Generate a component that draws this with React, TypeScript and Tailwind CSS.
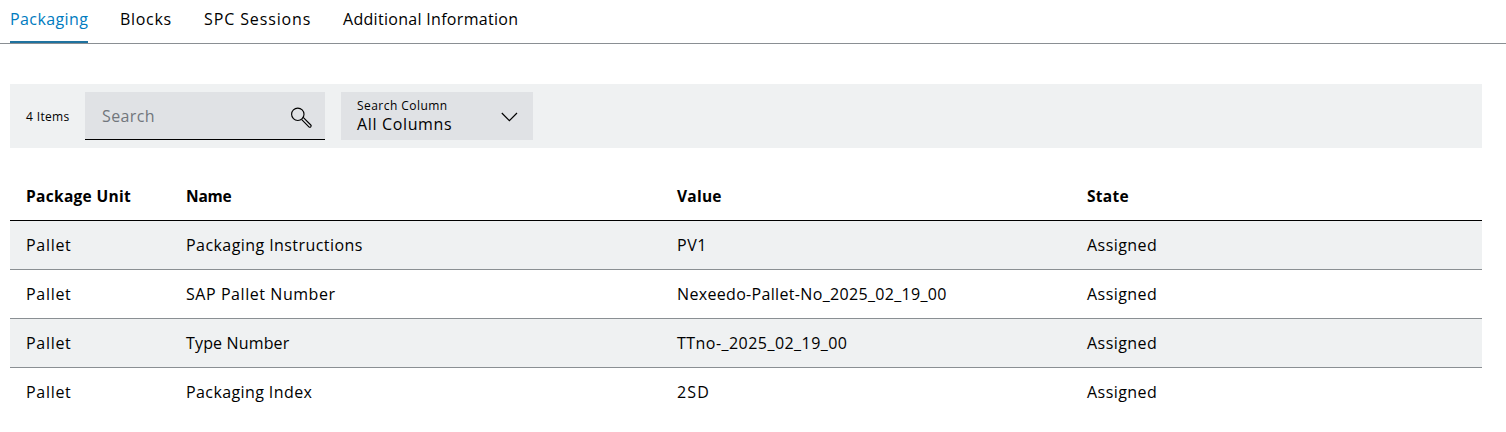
import { useState } from "react";

const tabs = [
  { label: "Packaging", className: "w-[78px] tracking-[0.4px]" },
  { label: "Blocks", className: "w-[52px] tracking-[0.7px]" },
  { label: "SPC Sessions", className: "w-[107px] tracking-[0.88px]" },
  { label: "Additional Information", className: "w-[175px] tracking-[0.3px]" },
];

const columns = [
  { label: "Package Unit", className: "tracking-[0.3px]" },
  { label: "Name", className: "tracking-[-0.2px]" },
  { label: "Value", className: "tracking-[0.25px]" },
  { label: "State", className: "tracking-[0.3px]" },
];

const rows = [
  { unit: "Pallet", name: "Packaging Instructions", value: "PV1", state: "Assigned", nameClass: "tracking-[0.43px]", valueClass: "tracking-[0.6px]" },
  { unit: "Pallet", name: "SAP Pallet Number", value: "Nexeedo-Pallet-No_2025_02_19_00", state: "Assigned", nameClass: "tracking-[0.56px]", valueClass: "tracking-[0.33px]" },
  { unit: "Pallet", name: "Type Number", value: "TTno-_2025_02_19_00", state: "Assigned", nameClass: "tracking-[0.15px]", valueClass: "tracking-[0.46px]" },
  { unit: "Pallet", name: "Packaging Index", value: "2SD", state: "Assigned", nameClass: "tracking-[0.4px]", valueClass: "tracking-[1.2px]" },
];

const grid = "grid grid-cols-[160px_491px_410px_411px] h-[49px] items-center";

function SearchIcon() {
  return (
    <svg className="w-6 h-6 shrink-0" viewBox="0 0 24 24" fill="none" stroke="#000" strokeWidth="1.15">
      <circle cx="7.8" cy="10.3" r="6.2" />
      <path d="M11.5 15.4 L18.9 22.8 A1.2 1.2 0 0 0 20.8 21 L13.2 13.4" />
    </svg>
  );
}

function ChevronIcon() {
  return (
    <svg className="w-6 h-6 shrink-0" viewBox="0 0 24 24" fill="none" stroke="#000" strokeWidth="1.2">
      <path d="M4.8 9 L12.4 16.6 L20 9" />
    </svg>
  );
}

export default function App() {
  const [active, setActive] = useState("Packaging");

  return (
    <div className="w-full h-[432px] overflow-hidden bg-white text-black text-[16px] leading-6 font-['Open_Sans',sans-serif]">
      {/* Tabs */}
      <div className="flex gap-8 h-11 pl-[10px] border-b border-[#8a8f93]">
        {tabs.map((tab) => (
          <button
            key={tab.label}
            onClick={() => setActive(tab.label)}
            className={`h-[43px] pt-[7px] flex items-start whitespace-nowrap border-b-2 ${tab.className} ${
              active === tab.label ? "text-[#007bc0] border-[#1f729f]" : "border-transparent"
            }`}
          >
            {tab.label}
          </button>
        ))}
      </div>

      <div className="ml-[10px] w-[1472px]">
        {/* Toolbar */}
        <div className="mt-10 h-16 flex items-center bg-[#eff1f2] pl-4">
          <span className="w-[59px] pt-0.5 text-[12px] whitespace-nowrap tracking-[0.35px]">4 Items</span>
          <label className="w-60 h-12 flex items-center bg-[#e0e2e5] border-b border-black pl-[17px] pr-[11px]">
            <input
              placeholder="Search"
              className="flex-1 min-w-0 pt-px outline-none bg-transparent tracking-[0.4px] placeholder:text-[#71767c]"
            />
            <SearchIcon />
          </label>
          <div className="ml-4 w-48 h-12 flex items-center bg-[#e0e2e5] pl-4 pr-3">
            <div className="flex-1 pb-px whitespace-nowrap">
              <div className="text-[12px] leading-[17px] tracking-[0.45px]">Search Column</div>
              <div className="leading-[21px] tracking-[0.65px]">All Columns</div>
            </div>
            <ChevronIcon />
          </div>
        </div>

        {/* Table */}
        <div className="mt-6 tracking-[0.45px]">
          <div className={`${grid} border-b border-black text-[15.5px] font-bold`}>
            {columns.map((column) => (
              <div key={column.label} className={`pl-4 ${column.className}`}>{column.label}</div>
            ))}
          </div>
          {rows.map((row) => (
            <div key={row.name} className={`${grid} border-b border-[#8a8f93] odd:bg-white even:bg-[#eff1f2] last:border-transparent`}>
              <div className="pl-4 tracking-[0.7px]">{row.unit}</div>
              <div className={`pl-4 ${row.nameClass}`}>{row.name}</div>
              <div className={`pl-4 ${row.valueClass}`}>{row.value}</div>
              <div className="pl-4">{row.state}</div>
            </div>
          ))}
        </div>
      </div>
    </div>
  );
}
